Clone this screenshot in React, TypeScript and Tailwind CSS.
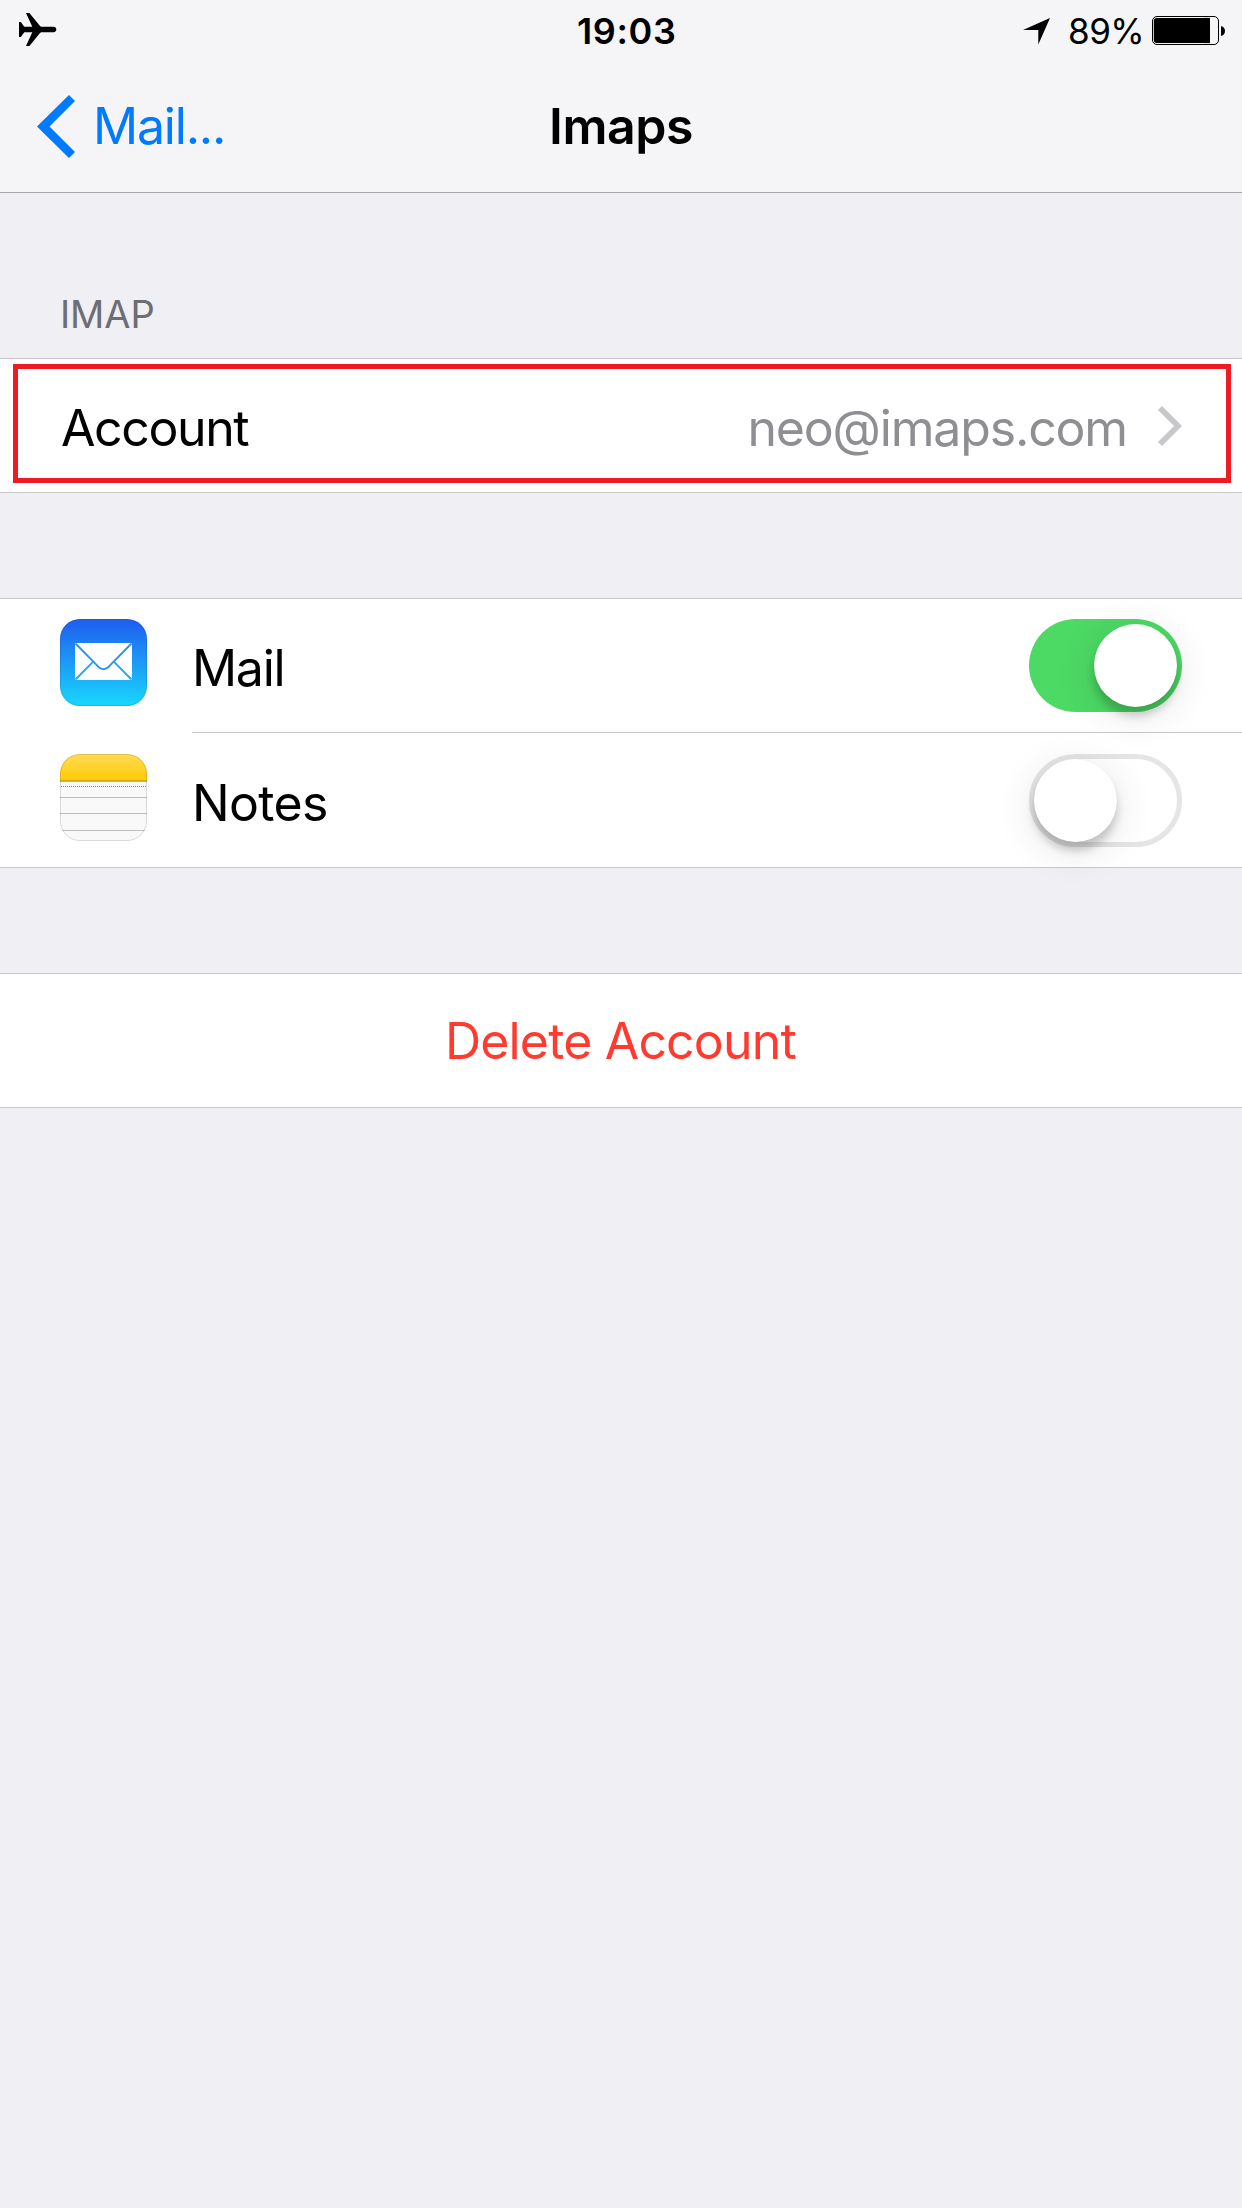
import type { ReactNode } from "react";

function StatusBar() {
  return (
    <div className="flex h-[60px] text-[36px] leading-[44px] text-black">
      <div className="w-[577px] pt-[13px] pl-[19px]">
        <svg width="38" height="33" viewBox="0 0 38 33">
          <path d="M0 9H1.8L5.3 13.8H13.3L7 0H10.4L20.6 12.6L22 13.8H34.6C38.2 13.8 38.2 19.2 34.6 19.2H22L20.6 20.4L10.4 33H7L13.3 19.2H5.3L1.8 24H0Z" />
        </svg>
      </div>
      <div className="pt-[9px] font-semibold tracking-[0.6px]">19:03</div>
      <div className="ml-auto flex w-[219px] shrink-0">
        <svg className="mt-[18px] shrink-0" width="27" height="27" viewBox="0 0 27 27">
          <path d="M27 0L15.3 26.5V12H0Z" />
        </svg>
        <span className="ml-[18px] w-[84px] shrink-0 pt-[9px] text-[35px] tracking-[-0.5px]">89%</span>
        <svg className="mt-4 shrink-0" width="73" height="29" viewBox="0 0 73 29">
          <rect x="0.5" y="0.5" width="66" height="28" rx="4.5" fill="none" stroke="#000" />
          <rect x="1.8" y="1.9" width="56.2" height="25.2" rx="3" />
          <rect x="52" y="1.9" width="6" height="25.2" />
          <path d="M69 10C74.3 11 74.3 19 69 20Z" />
        </svg>
      </div>
    </div>
  );
}

function NavBar() {
  return (
    <div className="flex h-[132px] items-center text-[50px] leading-[60px]">
      <div className="flex w-[549px] items-center pl-[37px] text-[#007aff]">
        <svg className="relative top-[0.5px]" width="38" height="63" viewBox="0 0 38 63">
          <path d="M0 31.5L32 0L38 6L12.5 31.5L38 57L32 63Z" fill="currentColor" />
        </svg>
        <span className="ml-[18px] tracking-[-1.2px]">Mail...</span>
      </div>
      <h1 className="font-semibold tracking-[-0.44px] text-black">Imaps</h1>
    </div>
  );
}

function Group({ children }: { children: ReactNode }) {
  return <section className="border-y border-[#c8c7cc] bg-white">{children}</section>;
}

function MailIcon() {
  return (
    <svg width="87" height="87" viewBox="0 0 87 87">
      <defs>
        <linearGradient id="mail" x1="0" y1="0" x2="0" y2="1">
          <stop offset="0.04" stopColor="#1e62f0" />
          <stop offset="0.96" stopColor="#19d2fd" />
        </linearGradient>
      </defs>
      <rect width="87" height="87" rx="20" fill="url(#mail)" />
      <rect x="0.5" y="0.5" width="86" height="86" rx="19.5" fill="none" stroke="#000" strokeOpacity="0.1" />
      <rect x="15" y="24" width="57" height="37" fill="#fff" />
      <g fill="none" strokeWidth="1.8">
        <path d="M15.5 24.5L36.8 46.1Q43.5 54.2 50.2 46.1L71.5 24.5" stroke="#2391f7" />
        <path d="M33.2 42.6L15.5 60.5M53.8 42.6L71.5 60.5" stroke="#1ca6f9" />
      </g>
    </svg>
  );
}

function NotesIcon() {
  return (
    <svg width="87" height="87" viewBox="0 0 87 87">
      <defs>
        <linearGradient id="notes" x1="0" y1="0" x2="0" y2="1">
          <stop offset="0" stopColor="#ffdb55" />
          <stop offset="1" stopColor="#fecb02" />
        </linearGradient>
        <clipPath id="notesShape">
          <rect width="87" height="87" rx="20" />
        </clipPath>
      </defs>
      <g clipPath="url(#notesShape)">
        <rect width="87" height="87" fill="#f9f9f9" />
        <rect width="87" height="27" fill="url(#notes)" />
        <path d="M0 26.5H87" stroke="#d9ab0c" />
        <path d="M0 27.5H87" stroke="#b5b0a4" />
        <path d="M1 32.5H87" stroke="#858585" strokeDasharray="1 1" />
        <path d="M0 43.5H87M0 59.5H87M0 76.5H87" stroke="#bdbdbf" />
      </g>
      <rect x="0.5" y="0.5" width="86" height="86" rx="19.5" fill="none" stroke="#000" strokeOpacity="0.12" />
    </svg>
  );
}

function Switch({ on }: { on: boolean }) {
  return (
    <div
      role="switch"
      aria-checked={on}
      className={
        on
          ? "flex h-[93px] w-[153px] justify-end rounded-full bg-[#4cd964] p-[5px]"
          : "flex h-[93px] w-[153px] rounded-full border-[5px] border-[#e5e5e5] bg-white"
      }
    >
      <div className="size-[83px] rounded-full bg-white shadow-[0_9px_9px_rgba(0,0,0,0.18),0_8px_40px_rgba(0,0,0,0.12),0_0_1px_rgba(0,0,0,0.1)]" />
    </div>
  );
}

export default function App() {
  return (
    <div className="min-h-[2208px] w-[1242px] overflow-hidden bg-[#efeff4] font-['Inter',sans-serif] text-[50px] leading-[60px] text-black">
      <header className="border-b border-[#a7a7aa] bg-[#f5f5f7]">
        <StatusBar />
        <NavBar />
      </header>

      <h2 className="h-[165px] pt-[98px] pl-[60px] text-[38px] leading-[46px] tracking-[-0.1px] text-[#6d6d72]">IMAP</h2>
      <Group>
        <div className="relative flex h-[133px] items-start justify-between pt-[39px] pr-[60px] pl-[61px]">
          <span className="tracking-[-1.4px]">Account</span>
          <div className="flex">
            <span className="tracking-[-1.16px] text-[#8e8e93]">neo@imaps.com</span>
            <svg className="mt-2 ml-[31px]" width="24" height="40" viewBox="0 0 24 40">
              <path d="M4 0L24 20L4 40L0 36L16 20L0 4Z" fill="#c7c7cc" />
            </svg>
          </div>
          <div className="pointer-events-none absolute top-[5px] right-[11px] bottom-[9px] left-[13px] border-[5px] border-[#ed1c24]" />
        </div>
      </Group>

      <div className="h-[105px]" />
      <Group>
        <div className="flex h-[133px] items-start pl-[60px]">
          <div className="mt-5">
            <MailIcon />
          </div>
          <span className="mt-[39px] ml-[45px] tracking-[-1.3px]">Mail</span>
          <div className="mt-5 mr-[60px] ml-auto">
            <Switch on />
          </div>
        </div>
        <div className="ml-[192px] h-px bg-[#c8c7cc]" />
        <div className="flex h-[134px] items-start pl-[60px]">
          <div className="mt-[21px]">
            <NotesIcon />
          </div>
          <span className="mt-10 ml-[45px] tracking-[-0.67px]">Notes</span>
          <div className="mt-[21px] mr-[60px] ml-auto">
            <Switch on={false} />
          </div>
        </div>
      </Group>

      <div className="h-[105px]" />
      <Group>
        <button className="block h-[133px] w-full pt-px pr-px text-center tracking-[-0.84px] text-[#ff3b30]">
          Delete Account
        </button>
      </Group>
    </div>
  );
}
